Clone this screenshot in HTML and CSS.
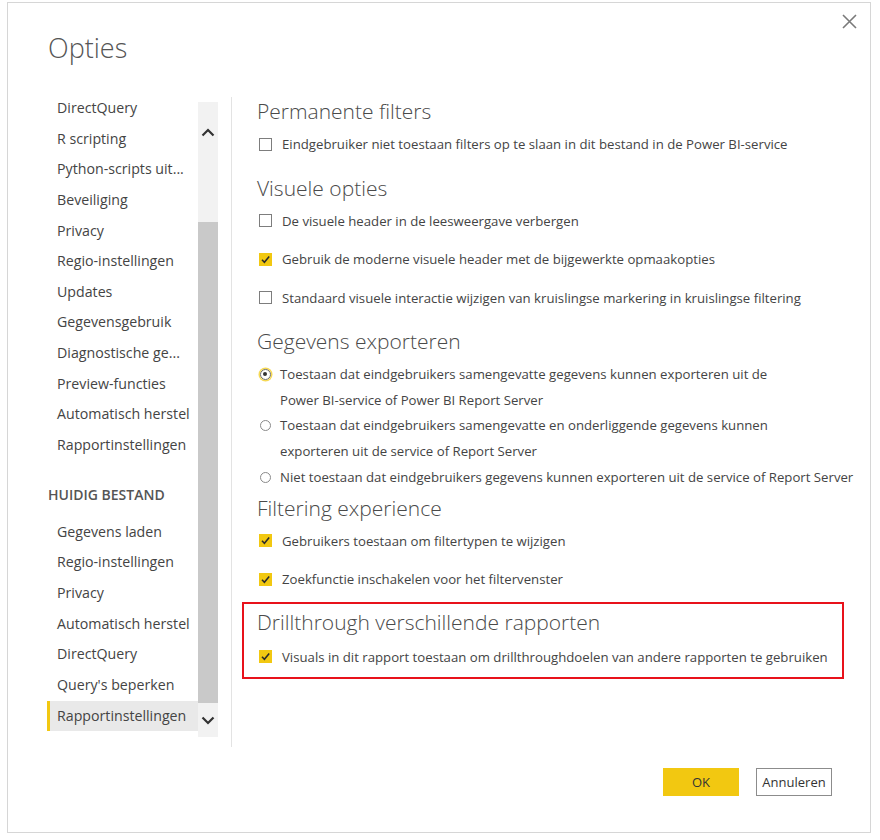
FILE: index.html
```html
<!DOCTYPE html>
<html lang="nl">
<head>
    <meta charset="UTF-8">
    <meta name="viewport" content="width=device-width, initial-scale=1.0">
    <title>Opties</title>
    <link rel="stylesheet" href="styles.css">
</head>
<body>
    <div class="dialog">
        <div class="dialog-head">
            <h1 class="dialog-title">Opties</h1>
            <svg class="close-btn" width="15" height="15" viewBox="0 0 15 15">
                <path d="M1 1 L14 14 M14 1 L1 14" stroke="#7a7a7a" stroke-width="1.6" fill="none"/>
            </svg>
        </div>

        <div class="dialog-body">
            <!-- left navigation with its own scrollbar -->
            <div class="nav">
                <ul class="nav-list">
                    <li>DirectQuery</li>
                    <li>R scripting</li>
                    <li>Python-scripts uit...</li>
                    <li>Beveiliging</li>
                    <li>Privacy</li>
                    <li>Regio-instellingen</li>
                    <li>Updates</li>
                    <li>Gegevensgebruik</li>
                    <li>Diagnostische ge...</li>
                    <li>Preview-functies</li>
                    <li>Automatisch herstel</li>
                    <li>Rapportinstellingen</li>
                </ul>
                <div class="nav-group">HUIDIG BESTAND</div>
                <ul class="nav-list">
                    <li>Gegevens laden</li>
                    <li>Regio-instellingen</li>
                    <li>Privacy</li>
                    <li>Automatisch herstel</li>
                    <li>DirectQuery</li>
                    <li>Query's beperken</li>
                    <li class="active">Rapportinstellingen</li>
                </ul>
            </div>
            <div class="scrollbar">
                <div class="scroll-btn">
                    <svg width="14" height="9" viewBox="0 0 14 9"><path d="M1.5 7.5 L7 2 L12.5 7.5" stroke="#333" stroke-width="2.2" fill="none"/></svg>
                </div>
                <div class="scroll-thumb"></div>
                <div class="scroll-btn down">
                    <svg width="14" height="9" viewBox="0 0 14 9"><path d="M1.5 1.5 L7 7 L12.5 1.5" stroke="#333" stroke-width="2.2" fill="none"/></svg>
                </div>
            </div>
            <div class="divider"></div>

            <!-- settings for the current page -->
            <div class="content">
                <div class="section">
                    <h2>Permanente filters</h2>
                    <div class="row"><span class="cb"></span>Eindgebruiker niet toestaan filters op te slaan in dit bestand in de Power BI-service</div>
                </div>

                <div class="section">
                    <h2>Visuele opties</h2>
                    <div class="row"><span class="cb"></span>De visuele header in de leesweergave verbergen</div>
                    <div class="row"><span class="cb checked"><svg width="13" height="13" viewBox="0 0 13 13"><path d="M3 6.8 L5.4 9.2 L10.2 3.6" stroke="#2b2b2b" stroke-width="1.6" fill="none"/></svg></span>Gebruik de moderne visuele header met de bijgewerkte opmaakopties</div>
                    <div class="row"><span class="cb"></span>Standaard visuele interactie wijzigen van kruislingse markering in kruislingse filtering</div>
                </div>

                <div class="section">
                    <h2>Gegevens exporteren</h2>
                    <div class="radios">
                        <div class="radio-row"><span class="rb on"></span><span>Toestaan dat eindgebruikers samengevatte gegevens kunnen exporteren uit de<br>Power BI-service of Power BI Report Server</span></div>
                        <div class="radio-row"><span class="rb"></span><span>Toestaan dat eindgebruikers samengevatte en onderliggende gegevens kunnen<br>exporteren uit de service of Report Server</span></div>
                        <div class="radio-row"><span class="rb"></span><span>Niet toestaan dat eindgebruikers gegevens kunnen exporteren uit de service of Report Server</span></div>
                    </div>
                </div>

                <div class="section tight">
                    <h2>Filtering experience</h2>
                    <div class="row"><span class="cb checked"><svg width="13" height="13" viewBox="0 0 13 13"><path d="M3 6.8 L5.4 9.2 L10.2 3.6" stroke="#2b2b2b" stroke-width="1.6" fill="none"/></svg></span>Gebruikers toestaan om filtertypen te wijzigen</div>
                    <div class="row"><span class="cb checked"><svg width="13" height="13" viewBox="0 0 13 13"><path d="M3 6.8 L5.4 9.2 L10.2 3.6" stroke="#2b2b2b" stroke-width="1.6" fill="none"/></svg></span>Zoekfunctie inschakelen voor het filtervenster</div>
                </div>

                <div class="section marked">
                    <h2>Drillthrough verschillende rapporten</h2>
                    <div class="row"><span class="cb checked"><svg width="13" height="13" viewBox="0 0 13 13"><path d="M3 6.8 L5.4 9.2 L10.2 3.6" stroke="#2b2b2b" stroke-width="1.6" fill="none"/></svg></span>Visuals in dit rapport toestaan om drillthroughdoelen van andere rapporten te gebruiken</div>
                </div>
            </div>
        </div>

        <div class="dialog-foot">
            <button class="btn primary">OK</button>
            <button class="btn">Annuleren</button>
        </div>
    </div>
</body>
</html>
```

FILE: styles.css
```css
body {
    margin: 0;
    background-color: #fff;
    font-family: "Open Sans", "Noto Sans", sans-serif;
    color: #444;
}
.dialog {
    box-sizing: border-box;
    width: 864px;
    height: 831px;
    margin: 2px 0 0 7px;
    border: 1px solid #d6d6d6;
    background-color: #fff;
    display: flex;
    flex-direction: column;
}
.dialog-head {
    display: flex;
    justify-content: space-between;
    align-items: flex-start;
    height: 92px;
}
.dialog-title {
    margin: 27px 0 0 40px;
    font-size: 27px;
    font-weight: 300;
    color: #555;
    line-height: 36px;
}
.close-btn {
    margin: 11px 13px 0 0;
}
.dialog-body {
    display: flex;
    height: 652px;
}

/* navigation */
.nav {
    width: 151px;
    margin: -2px 0 0 39px;
    font-size: 14.2px;
    color: #444;
}
.nav-list {
    list-style: none;
    margin: 0;
    padding: 0;
}
.nav-list li {
    height: 30.65px;
    line-height: 30.65px;
    padding-left: 10px;
    white-space: nowrap;
}
.nav-list li.active {
    background-color: #e9e9e9;
    box-shadow: inset 3px 0 0 #f2c811;
}
.nav-group {
    margin: 16px 0 0 1px;
    height: 40px;
    line-height: 36px;
    font-size: 14px;
    font-weight: 600;
    color: #555;
}
.scrollbar {
    width: 20px;
    margin-top: 7px;
    height: 635px;
    background-color: #f2f2f2;
    display: flex;
    flex-direction: column;
}
.scroll-btn {
    height: 61px;
    display: flex;
    justify-content: center;
    align-items: center;
}
.scroll-btn.down {
    height: 34px;
}
.scroll-thumb {
    height: 481px;
    margin-top: 59px;
    background-color: #c9c9c9;
}
.divider {
    width: 1px;
    margin: 2px 0 0 13px;
    height: 650px;
    background-color: #e3e3e3;
}

/* settings */
.content {
    flex: 1;
    padding-left: 25px;
    font-size: 13.2px;
}
.section h2 {
    margin: 0;
    font-size: 21px;
    font-weight: 300;
    line-height: 28px;
    color: #4a4a4a;
}
.section {
    margin-top: 10px;
}
.section:first-child {
    margin-top: 2px;
}
.section.tight {
    margin-top: 3px;
}
.row {
    display: flex;
    align-items: center;
    height: 38.5px;
    white-space: nowrap;
}
.cb {
    box-sizing: border-box;
    width: 13px;
    height: 13px;
    margin: 0 10px 0 2px;
    border: 1.5px solid #7d7d7d;
    background-color: #fff;
    flex-shrink: 0;
}
.cb.checked {
    border: none;
    background-color: #f2c811;
}
.cb svg {
    display: block;
}
.radios {
    padding-top: 7px;
    line-height: 25.7px;
}
.radio-row {
    display: flex;
    align-items: flex-start;
    white-space: nowrap;
}
.rb {
    box-sizing: border-box;
    width: 11px;
    height: 11px;
    margin: 7px 9px 0 3px;
    border: 1.5px solid #8a8a8a;
    border-radius: 50%;
    flex-shrink: 0;
    position: relative;
}
.rb.on {
    border-color: #6d6d6d;
    box-shadow: 0 0 0 1.5px #f6d955;
}
.rb.on::after {
    content: "";
    position: absolute;
    left: 2px;
    top: 2px;
    width: 4px;
    height: 4px;
    border-radius: 50%;
    background-color: #333;
}
.section.marked {
    margin: 3px 0 0 -15px;
    width: 602px;
    box-sizing: border-box;
    border: 2px solid #e8121b;
    padding: 4px 0 1px 13px;
}
.section.marked .row {
    margin-top: 2px;
}

/* buttons */
.dialog-foot {
    display: flex;
    justify-content: flex-end;
    gap: 17px;
    padding: 21px 38px 0 0;
}
.btn {
    width: 76px;
    height: 28px;
    font-family: "Open Sans", "Noto Sans", sans-serif;
    font-size: 13px;
    color: #333;
    border: 1px solid #8c8c8c;
    background-color: #fff;
    padding: 0;
}
.btn.primary {
    background-color: #f2c811;
    border-color: #f2c811;
}
```
